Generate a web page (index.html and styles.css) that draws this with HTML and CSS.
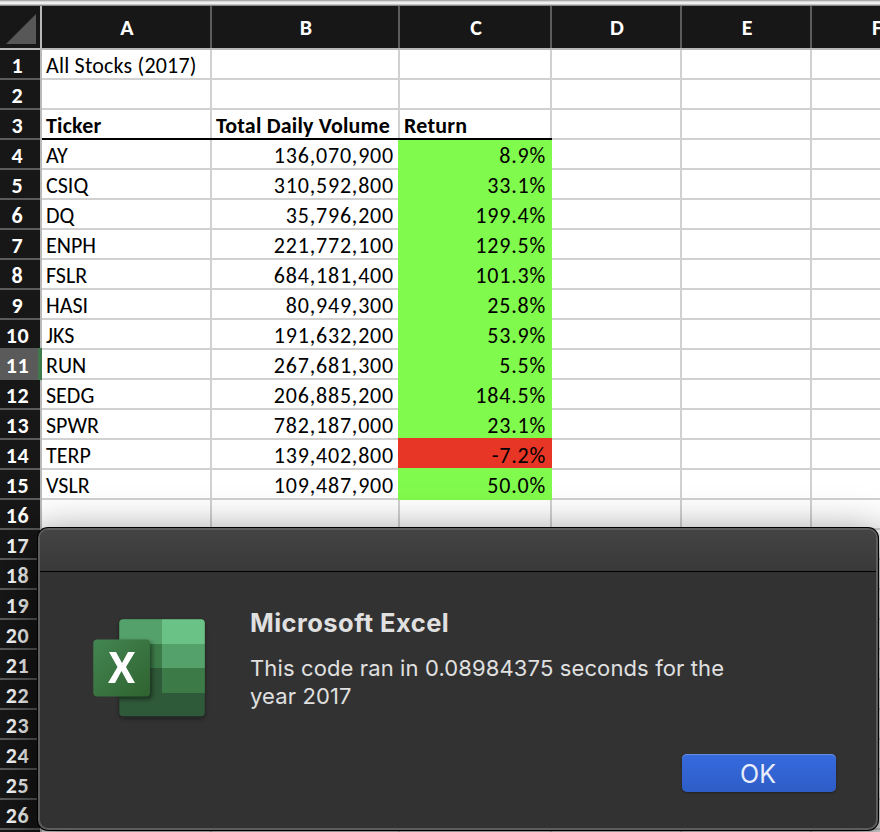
FILE: index.html
```html
<!DOCTYPE html>
<html lang="en">
<head>
<meta charset="utf-8">
<title>All Stocks (2017)</title>
<link rel="stylesheet" href="styles.css">
</head>
<body>
<div class="ribbon-edge"></div>
<div class="sheet" id="sheet">
  <div class="corner"><svg width="31" height="31" viewBox="0 0 31 31"><path d="M30 0V30H0Z" fill="#575757"/></svg></div>
  <div class="col">A</div><div class="col">B</div><div class="col">C</div><div class="col">D</div><div class="col">E</div><div class="col last">F</div>
</div>
<div class="dialog">
  <div class="titlebar"></div>
  <div class="content">
    <svg class="logo" width="126" height="112" viewBox="0 0 126 112">
      <defs>
        <linearGradient id="tile" x1="0" y1="0" x2="1" y2="1"><stop offset="0" stop-color="#438653"/><stop offset="1" stop-color="#2f632f"/></linearGradient>
        <clipPath id="book"><rect x="33.300" y="6.300" width="85.500" height="97" rx="4"/></clipPath>
        <filter id="soft" x="-20%" y="-20%" width="150%" height="150%"><feGaussianBlur stdDeviation="2.5"/></filter>
      </defs>
      <rect x="34" y="9" width="84" height="96" rx="4" fill="#111" opacity=".6" filter="url(#soft)"/>
      <g clip-path="url(#book)">
        <rect x="33" y="6" width="86" height="98" fill="#2f5a39"/>
        <rect x="33" y="6" width="43" height="25" fill="#55a16b"/>
        <rect x="76" y="6" width="43" height="25" fill="#6ac286"/>
        <rect x="33" y="31" width="43" height="24" fill="#3c7b48"/>
        <rect x="76" y="31" width="43" height="24" fill="#55a16b"/>
        <rect x="76" y="55" width="43" height="25" fill="#3c7b48"/>
        <rect x="9" y="29" width="57" height="57" rx="4" fill="#000" opacity=".5" filter="url(#soft)"/>
      </g>
      <rect x="7.300" y="26.500" width="56.700" height="57" rx="4" fill="url(#tile)"/>
      <path d="M23 39H30L36 50L42 39H49L40 54L49 70H42L35.500 58L29 70H22L31.500 54Z" fill="#fff"/>
    </svg>
    <div class="message">
      <h1>Microsoft Excel</h1>
      <p>This code ran in 0.08984375 seconds for the<br>year 2017</p>
    </div>
  </div>
  <button class="ok">OK</button>
</div>
<script src="sheet.js"></script>
</body>
</html>
```
FILE: sheet.js
```js
const rows = [
  ["All Stocks (2017)"], [],
  ["Ticker", "Total Daily Volume", "Return"],
  ["AY", "136,070,900", "8.9%"],
  ["CSIQ", "310,592,800", "33.1%"],
  ["DQ", "35,796,200", "199.4%"],
  ["ENPH", "221,772,100", "129.5%"],
  ["FSLR", "684,181,400", "101.3%"],
  ["HASI", "80,949,300", "25.8%"],
  ["JKS", "191,632,200", "53.9%"],
  ["RUN", "267,681,300", "5.5%"],
  ["SEDG", "206,885,200", "184.5%"],
  ["SPWR", "782,187,000", "23.1%"],
  ["TERP", "139,402,800", "-7.2%"],
  ["VSLR", "109,487,900", "50.0%"]
];
const sheet = document.getElementById("sheet");
function add(className, text) {
  const cell = document.createElement("div");
  cell.className = className;
  cell.textContent = text || "";
  sheet.append(cell);
}
for (let r = 1; r <= 27; r++) {
  const sliver = r === 27 ? " sliver" : "";
  add("row-head" + (r === 11 ? " active" : "") + sliver, sliver ? "" : String(r));
  const row = rows[r - 1] || [];
  for (let c = 0; c < 6; c++) {
    let name = "cell" + sliver;
    if (r === 1 && c === 0) name += " title";
    if (r === 3 && c < 3) name += " heading";
    if (r > 3 && r < 16) {
      if (c === 0) name += " ticker";
      if (c === 1) name += " number";
      if (c === 2) name += " number percent " + (row[2][0] === "-" ? "loss" : "gain") + (r === 15 ? " final" : "");
    }
    add(name, row[c]);
  }
}
```
FILE: styles.css
```css
* { box-sizing: border-box; }
body {
  margin: 0;
  width: 880px;
  height: 832px;
  overflow: hidden;
  position: relative;
  background: #fff;
  font-family: Carlito, Lato, sans-serif;
  font-size: 22px;
  color: #000;
}
.ribbon-edge {
  height: 6px;
  background: linear-gradient(#aaa 0 1px, #d8d8d8 1px 2px, #eee 2px 4px, #c4c4c4 4px 5px, #888 5px);
}
.sheet {
  display: grid;
  grid-template-columns: 42px 170px 188px 152px 130px 130px 68px;
  grid-template-rows: 44px repeat(26, 30px) 2px;
  width: 880px;
}
.corner, .col {
  background: #171717;
  border-bottom: 2px solid #b9b9b9;
}
.corner { border-right: 2px solid #b9b9b9; padding: 8px 0 0 6px; }
.corner svg { display: block; }
.col {
  color: #fff;
  font-weight: 700;
  text-align: center;
  line-height: 43px;
  padding-left: 2px;
  border-right: 2px solid #5c5c5c;
  position: relative;
}
.col.last { text-align: left; padding-left: 60px; border-right: 0; overflow: hidden; }
.col::after {
  content: "";
  position: absolute;
  right: -2px;
  bottom: -2px;
  width: 2px;
  height: 2px;
  background: #b9b9b9;
}
.row-head {
  background: linear-gradient(#5c5c5c, #5c5c5c) left bottom / 40px 2px no-repeat #171717;
  border-right: 2px solid #b9b9b9;
  color: #fff;
  font-weight: 700;
  line-height: 32px;
  padding-right: 5px;
  text-align: center;
  letter-spacing: .6px;
}
.row-head.active {
  background: #5a5a5a;
  margin-top: -2px;
  padding: 2px 3px 0 0;
  border-right: 4px solid #3e7a4c;
}
.row-head.sliver { background: #171717; }
.cell {
  border-right: 2px solid #d1d1d1;
  border-bottom: 2px solid #d1d1d1;
  padding: 0 4px;
  line-height: 32px;
  white-space: nowrap;
}
.cell.sliver { border-bottom: 0; }
.cell:nth-child(7n) { border-right: 0; }
.title { letter-spacing: .2px; }
.heading { font-weight: 700; letter-spacing: .2px; border-bottom-color: #000; position: relative; }
.heading::after {
  content: "";
  position: absolute;
  right: -2px;
  bottom: -2px;
  width: 2px;
  height: 2px;
  background: #000;
}
.number { text-align: right; letter-spacing: .8px; }
.percent { margin: 0 0 0 -2px; border-color: #80fa4c; background: #80fa4c; }
.percent.loss { position: relative; margin-top: -2px; padding-top: 2px; border: 0 solid #e73526; border-right-width: 2px; background: #e73526; height: 30px; }
.percent.final { margin-top: -2px; padding-top: 2px; }
.dialog {
  position: absolute;
  left: 38px;
  top: 528px;
  width: 840px;
  height: 302px;
  border: 2px solid #5d5d5d;
  border-radius: 10px;
  background: #323232;
  box-shadow: 0 0 0 1px #000, 0 16px 42px 9px rgba(0, 0, 0, .5);
  font-family: Inter, sans-serif;
  color: #e0e0e0;
  overflow: hidden;
}
.titlebar {
  height: 42px;
  background: linear-gradient(#444, #393939);
  border-bottom: 1px solid #000;
}
.content {
  display: flex;
  padding: 41px 0 0 46px;
  gap: 38px;
}
.logo { display: block; flex: none; }
.message { white-space: nowrap; }
h1 { margin: -5px 0 0; font-size: 25.5px; font-weight: 700; line-height: 30px; letter-spacing: .45px; }
p { margin: 16px 0 0; font-size: 22px; line-height: 28px; letter-spacing: .12px; }
.ok {
  display: block;
  width: 154px;
  height: 38px;
  margin: 29px 0 0 642px;
  padding: 1px 2px 0 0;
  border: 0;
  border-radius: 5px;
  background: linear-gradient(#366ade, #2e5dc7);
  box-shadow: inset 0 1px #668ee5, 0 1px 2px #222;
  color: #e8edfa;
  font: 25px/39px Inter, sans-serif;
}
```
